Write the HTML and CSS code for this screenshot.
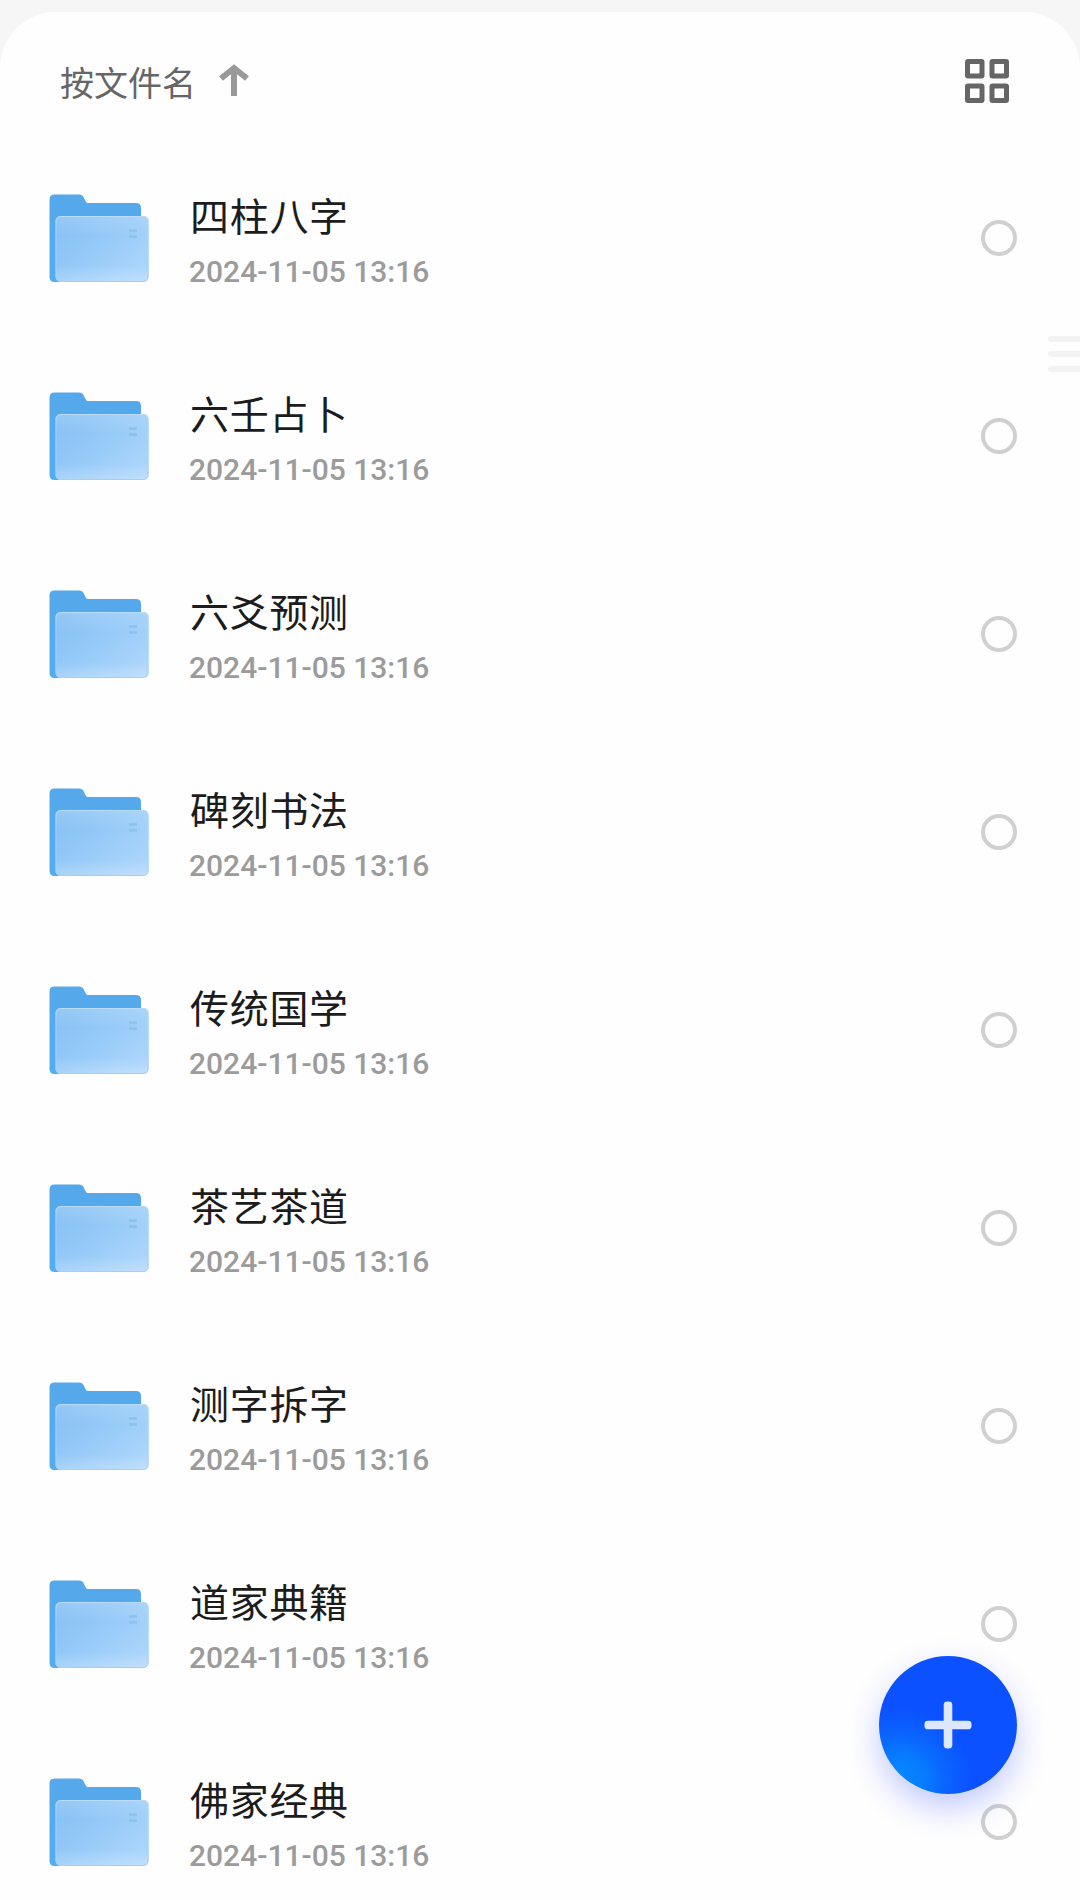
FILE: index.html
```html
<!DOCTYPE html>
<html lang="zh-CN">
  <head>
    <meta charset="utf-8" />
    <meta name="viewport" content="width=device-width, initial-scale=1" />
    <title>文件</title>
    <link rel="stylesheet" href="styles.css">
  </head>
  <body>
    <!-- shared folder icon -->
    <svg width="0" height="0" class="defs">
      <defs>
        <linearGradient id="back" x1="0" y1="0" x2="0" y2="1">
          <stop offset="0" stop-color="#55a8ea" />
          <stop offset="1" stop-color="#54adf1" />
        </linearGradient>
        <linearGradient id="front" x1="0" y1="0.1" x2="1" y2="0.9">
          <stop offset="0" stop-color="#84c0f3" />
          <stop offset="0.45" stop-color="#96caf8" />
          <stop offset="1" stop-color="#b0d7fc" />
        </linearGradient>
        <linearGradient id="shine" x1="0" y1="0" x2="0" y2="1">
          <stop offset="0" stop-color="#b8dcfa" />
          <stop offset="0.2" stop-color="#a8d3f9" />
          <stop offset="1" stop-color="#a3cff5" />
        </linearGradient>
        <linearGradient id="fade" x1="0" y1="0" x2="0" y2="1">
          <stop offset="0" stop-color="#fff" stop-opacity="0.16" />
          <stop offset="0.3" stop-color="#fff" stop-opacity="0" />
          <stop offset="0.75" stop-color="#fff" stop-opacity="0" />
          <stop offset="1" stop-color="#fff" stop-opacity="0.2" />
        </linearGradient>
      </defs>
      <symbol id="folder" viewBox="0 0 100 88">
        <path fill="url(#back)" d="M5.5 0.5H30Q33.5 0.5 34.5 3L36.5 7Q37 9 39 9H87Q92 9 92 14V60H12V88H5.5Q0.5 88 0.5 83V5.5Q0.5 0.5 5.5 0.5Z" />
        <rect x="6.5" y="22" width="93" height="66" rx="5" fill="url(#front)" />
        <rect x="7" y="22.5" width="92" height="65" rx="4.5" fill="url(#fade)" stroke="url(#shine)" />
        <path stroke="#8fc0ec" stroke-width="2.6" d="M80 36.5h8M80 42.5h8" />
      </symbol>
    </svg>

    <div class="sheet">
      <div class="toolbar">
        <div class="sort">
          <span class="sort-text">按文件名</span>
          <svg class="sort-arrow" width="30" height="32" viewBox="0 0 30 32">
            <path d="M15 32V4M2 14.5L15 4L28 14.5" />
          </svg>
        </div>
        <svg class="grid-icon" width="44" height="44" viewBox="0 0 44 44">
          <rect x="2.5" y="2.5" width="14.5" height="14.5" rx="0.5" />
          <rect x="27" y="2.5" width="14.5" height="14.5" rx="0.5" />
          <rect x="2.5" y="27" width="14.5" height="14.5" rx="0.5" />
          <rect x="27" y="27" width="14.5" height="14.5" rx="0.5" />
        </svg>
      </div>

      <div class="file-list">
        <div class="file-item">
          <svg class="folder"><use href="#folder" /></svg>
          <div class="info">
            <div class="name">四柱八字</div>
            <div class="date">2024-11-05 13:16</div>
          </div>
          <span class="radio"></span>
        </div>
        <div class="file-item">
          <svg class="folder"><use href="#folder" /></svg>
          <div class="info">
            <div class="name">六壬占卜</div>
            <div class="date">2024-11-05 13:16</div>
          </div>
          <span class="radio"></span>
        </div>
        <div class="file-item">
          <svg class="folder"><use href="#folder" /></svg>
          <div class="info">
            <div class="name">六爻预测</div>
            <div class="date">2024-11-05 13:16</div>
          </div>
          <span class="radio"></span>
        </div>
        <div class="file-item">
          <svg class="folder"><use href="#folder" /></svg>
          <div class="info">
            <div class="name">碑刻书法</div>
            <div class="date">2024-11-05 13:16</div>
          </div>
          <span class="radio"></span>
        </div>
        <div class="file-item">
          <svg class="folder"><use href="#folder" /></svg>
          <div class="info">
            <div class="name">传统国学</div>
            <div class="date">2024-11-05 13:16</div>
          </div>
          <span class="radio"></span>
        </div>
        <div class="file-item">
          <svg class="folder"><use href="#folder" /></svg>
          <div class="info">
            <div class="name">茶艺茶道</div>
            <div class="date">2024-11-05 13:16</div>
          </div>
          <span class="radio"></span>
        </div>
        <div class="file-item">
          <svg class="folder"><use href="#folder" /></svg>
          <div class="info">
            <div class="name">测字拆字</div>
            <div class="date">2024-11-05 13:16</div>
          </div>
          <span class="radio"></span>
        </div>
        <div class="file-item">
          <svg class="folder"><use href="#folder" /></svg>
          <div class="info">
            <div class="name">道家典籍</div>
            <div class="date">2024-11-05 13:16</div>
          </div>
          <span class="radio"></span>
        </div>
        <div class="file-item">
          <svg class="folder"><use href="#folder" /></svg>
          <div class="info">
            <div class="name">佛家经典</div>
            <div class="date">2024-11-05 13:16</div>
          </div>
          <span class="radio"></span>
        </div>
      </div>
    </div>

    <div class="scroll-handle">
      <span></span>
      <span></span>
      <span></span>
    </div>

    <button class="fab" aria-label="新建">
      <svg width="48" height="48" viewBox="0 0 48 48">
        <rect x="19.7" y="0.5" width="8.6" height="47" rx="3.4" />
        <rect x="0.5" y="19.7" width="47" height="8.6" rx="3.4" />
      </svg>
    </button>
  </body>
</html>
```
FILE: styles.css
```css
* {
  box-sizing: border-box;
}

body {
  height: 1900px;
  margin: 0;
  padding-top: 12px;
  overflow: hidden;
  position: relative;
  font-family: Roboto, "Noto Sans CJK SC", sans-serif;
  background: #f6f6f7;
}

.defs {
  position: absolute;
}

.sheet {
  height: 1888px;
  overflow: hidden;
  background: #fefefe;
  border-radius: 56px 56px 0 0;
}

.toolbar {
  display: flex;
  align-items: center;
  justify-content: space-between;
  height: 127px;
  padding: 11px 71px 0 60px;
}

.sort {
  display: flex;
  align-items: center;
  gap: 23px;
}

.sort-text {
  font-size: 34px;
  line-height: 40px;
  padding-top: 6px;
  color: #666;
}

.sort-arrow {
  margin-bottom: 2px;
  fill: none;
  stroke: #999;
  stroke-width: 6;
}

.grid-icon {
  fill: none;
  stroke: #666;
  stroke-width: 5;
}

.file-item {
  display: flex;
  align-items: center;
  height: 198px;
  padding: 0 63px 0 49px;
}

.folder {
  width: 100px;
  height: 88px;
  margin-right: 40px;
}

.info {
  flex: 1;
  padding-top: 5px;
}

.name {
  padding-left: 1px;
  font-size: 39px;
  line-height: 56px;
  letter-spacing: 0.7px;
  color: #1c1c1c;
}

.date {
  font-size: 30px;
  font-weight: 500;
  line-height: 40px;
  margin-top: 6px;
  color: #9b9b9b;
}

.radio {
  width: 36px;
  height: 36px;
  border: 4px solid #d0d0d0;
  border-radius: 50%;
}

.scroll-handle {
  position: absolute;
  top: 336px;
  right: 0;
  display: flex;
  flex-direction: column;
  gap: 9px;
}

.scroll-handle span {
  width: 32px;
  height: 6px;
  border-radius: 3px 0 0 3px;
  background: #f3f3f3;
}

.fab {
  position: absolute;
  right: 63px;
  bottom: 106px;
  display: flex;
  align-items: center;
  justify-content: center;
  width: 138px;
  height: 138px;
  padding: 0;
  border: none;
  border-radius: 50%;
  background: radial-gradient(circle at 15% 90%, #0589ff 0%, #077cff 14%, #0a66ff 26%, #0c51ff 42%);
  box-shadow: 0 14px 32px rgba(40, 70, 255, 0.28);
}

.fab rect {
  fill: #dde7ff;
}
```
